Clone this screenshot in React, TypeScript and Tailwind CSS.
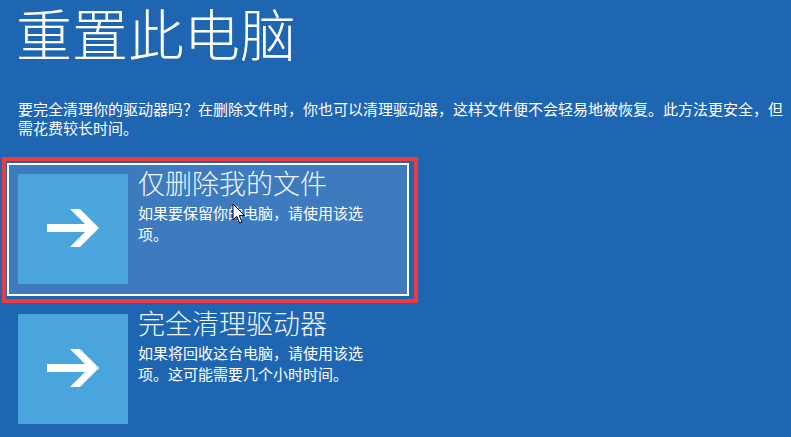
const FONT = '"Microsoft YaHei", "Noto Sans CJK SC", "Noto Sans", sans-serif'

type Option = {
  title: string
  desc: string
  selected?: boolean
}

const OPTIONS: Option[] = [
  { title: '仅删除我的文件', desc: '如果要保留你的电脑，请使用该选项。', selected: true },
  { title: '完全清理驱动器', desc: '如果将回收这台电脑，请使用该选项。这可能需要几个小时时间。' },
]

function ArrowTile() {
  return (
    <div className="w-[110px] h-[110px] shrink-0 bg-[#4ba5dd]">
      <svg width="110" height="110" viewBox="0 0 110 110">
        <rect x="29" y="50" width="44" height="8" fill="#fff" />
        <polygon points="52,35 62,35 81,54 62,73 52,73 71,54" fill="#fff" />
      </svg>
    </div>
  )
}

function Cursor() {
  return (
    <svg
      className="absolute left-[232px] top-[203px] pointer-events-none"
      width="14"
      height="22"
      viewBox="0 0 14 22"
    >
      <polygon
        points="1,1 1,17 4.8,13.4 7.6,20 10,19 7.3,12.6 12.5,12.6"
        fill="#fff"
        stroke="#000"
        strokeWidth="1"
        strokeLinejoin="round"
      />
    </svg>
  )
}

function OptionRow({ option }: { option: Option }) {
  return (
    <div
      className={
        option.selected
          ? 'relative w-[402px] flex gap-[10px] p-[9px] pb-[10px] border-2 border-white bg-[#3d7bbe]'
          : 'relative w-[402px] flex gap-[10px] p-[9px] pb-[10px] border-2 border-transparent'
      }
    >
      <ArrowTile />
      <div className="-mt-[6px] w-[232px]">
        <div className="text-[27px] leading-[30px] font-light text-[#f2f6fb]">{option.title}</div>
        <div className="mt-[4px] text-[15px] leading-[21px]">{option.desc}</div>
      </div>
      {option.selected && (
        <div className="absolute -top-[8px] -left-[7px] -right-[11px] -bottom-[9px] border-4 border-[#f2393f] pointer-events-none" />
      )}
    </div>
  )
}

export default function App() {
  return (
    <div
      className="relative w-[791px] h-[437px] overflow-hidden bg-[#1f66b2] text-white"
      style={{ fontFamily: FONT }}
    >
      <div className="pl-[18px]">
        <h1 className="-ml-[2px] text-[56px] leading-[64px] font-light">重置此电脑</h1>
        <p className="mt-[35px] text-[15px] leading-[19px]">
          要完全清理你的驱动器吗？在删除文件时，你也可以清理驱动器，这样文件便不会轻易地被恢复。此方法更安全，但需花费较长时间。
        </p>
      </div>

      <div className="mt-[26px] pl-[7px] flex flex-col gap-[7px]">
        {OPTIONS.map((o) => (
          <OptionRow key={o.title} option={o} />
        ))}
      </div>

      <Cursor />
    </div>
  )
}
